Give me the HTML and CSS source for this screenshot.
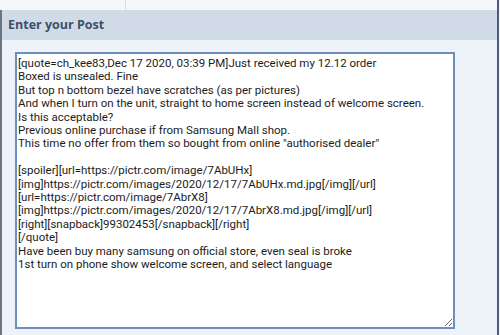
FILE: index.html
```html
<!DOCTYPE html>
<html>
<head>
<meta charset="utf-8">
<link rel="stylesheet" href="styles.css">
</head>
<body>
<div class="frame">
  <div class="topbar"><div class="tab"></div></div>
  <div class="panel">
    <div class="header">Enter your Post</div>
    <div class="body">
<textarea class="post" readonly>[quote=ch_kee83,Dec 17 2020, 03:39 PM]Just received my 12.12 order
Boxed is unsealed. Fine
But top n bottom bezel have scratches (as per pictures)
And when I turn on the unit, straight to home screen instead of welcome screen.
Is this acceptable?
Previous online purchase if from Samsung Mall shop.
This time no offer from them so bought from online "authorised dealer"

[spoiler][url=https://pictr.com/image/7AbUHx]
[img]https://pictr.com/images/2020/12/17/7AbUHx.md.jpg[/img][/url]
[url=https://pictr.com/image/7AbrX8]
[img]https://pictr.com/images/2020/12/17/7AbrX8.md.jpg[/img][/url]
[right][snapback]99302453[/snapback][/right]
[/quote]
Have been buy many samsung on official store, even seal is broke
1st turn on phone show welcome screen, and select language</textarea>
    </div>
  </div>
</div>
</body>
</html>
```
FILE: styles.css
```css
html, body {
  margin: 0;
  padding: 0;
  background: #f4f6fa;
}
.frame {
  width: 497px;
  height: 335px;
  border-right: 2px solid #4b5d7c;
  display: flex;
  flex-direction: column;
}
.topbar {
  height: 10px;
  display: flex;
  background: #f5f7fa;
}
.tab {
  width: 125px;
  border-right: 1px solid #d6dce4;
}
.panel {
  flex: 1;
  border-left: 2px solid #6d7480;
  display: flex;
  flex-direction: column;
}
.header {
  height: 30px;
  background: #d0dbe7;
  color: #3d4f6b;
  font-family: "Open Sans", sans-serif;
  font-weight: 700;
  font-size: 12.5px;
  line-height: 30px;
  padding-left: 6px;
}
.body {
  flex: 1;
  background: #eef3f9;
  padding: 12px 0 0 13px;
}
.post {
  box-sizing: border-box;
  width: 440px;
  height: 277px;
  margin: 0;
  border: 2px solid #6e8fbd;
  background: #fff;
  color: #1c1c1c;
  font-family: Roboto, sans-serif;
  font-size: 11.5px;
  line-height: 13.4px;
  padding: 3px 1px;
  overflow: hidden;
  outline: none;
}
```
